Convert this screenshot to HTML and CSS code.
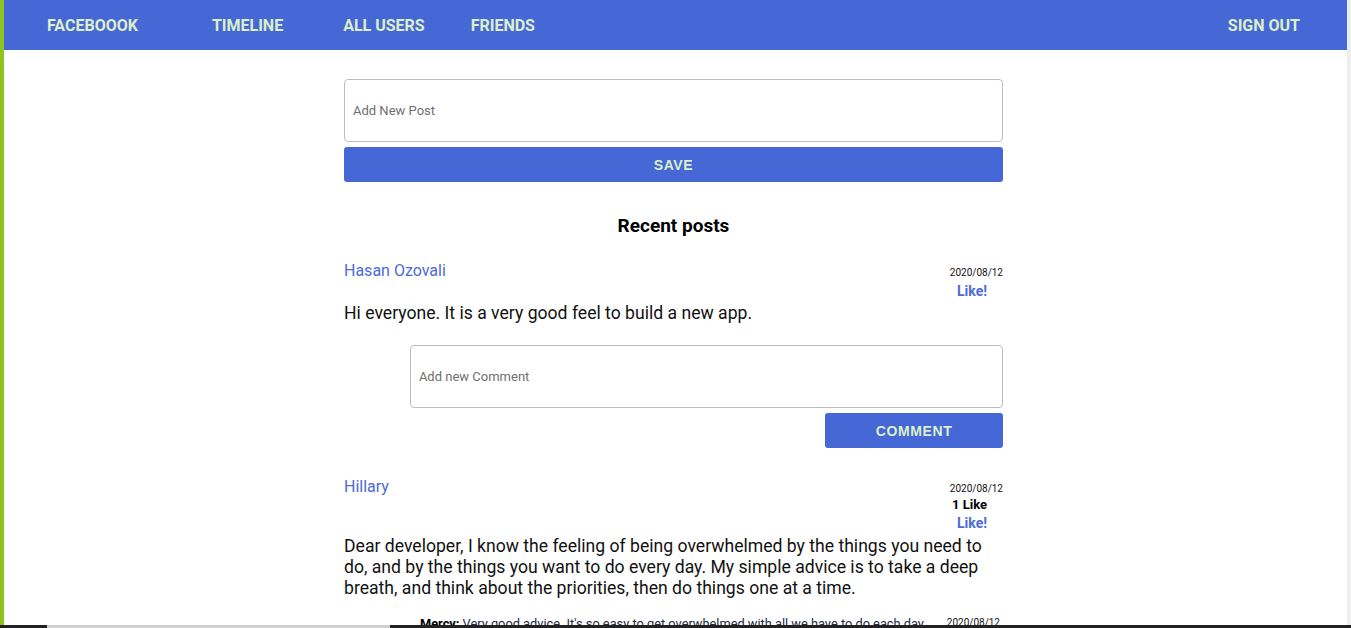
FILE: index.html
```html
<!DOCTYPE html>
<html lang="en">
<head>
<meta charset="utf-8">
<title>Facebooook</title>
<link rel="stylesheet" href="styles.css">
</head>
<body>
<header class="navbar">
  <nav class="nav-left">
    <a class="nav-link brand" href="#">Faceboook</a>
    <a class="nav-link timeline" href="#">Timeline</a>
    <a class="nav-link users" href="#">All users</a>
    <a class="nav-link friends" href="#">Friends</a>
  </nav>
  <a class="nav-link signout" href="#">Sign out</a>
</header>

<div class="page">
<main class="container">
  <form class="post-form">
    <input class="text-input" type="text" placeholder="Add New Post">
    <button class="btn btn-full" type="button">Save</button>
  </form>

  <h2 class="section-title">Recent posts</h2>

  <article class="post">
    <div class="post-head">
      <a class="author" href="#">Hasan Ozovali</a>
      <div class="meta">
        <span class="date">2020/08/12</span>
        <a class="like" href="#">Like!</a>
      </div>
    </div>
    <p class="post-body">Hi everyone. It is a very good feel to build a new app.</p>
    <form class="comment-form">
      <input class="text-input" type="text" placeholder="Add new Comment">
      <div class="comment-actions">
        <button class="btn btn-comment" type="button">Comment</button>
      </div>
    </form>
  </article>

  <article class="post">
    <div class="post-head">
      <a class="author" href="#">Hillary</a>
      <div class="meta">
        <span class="date">2020/08/12</span>
        <span class="like-count">1 Like</span>
        <a class="like" href="#">Like!</a>
      </div>
    </div>
    <p class="post-body">Dear developer, I know the feeling of being overwhelmed by the things you need to do, and by the things you want to do every day. My simple advice is to take a deep breath, and think about the priorities, then do things one at a time.</p>
    <ul class="comments">
      <li class="comment">
        <p class="comment-text"><strong>Mercy:</strong> Very good advice. It's so easy to get overwhelmed with all we have to do each day.</p>
        <span class="date">2020/08/12</span>
      </li>
    </ul>
  </article>
</main>
</div>

<div class="bottom-bar"><span class="bottom-thumb"></span></div>
</body>
</html>
```

FILE: styles.css
```css
html {
  overflow: hidden;
  background: #ffffff;
}

body {
  margin: 0;
  min-height: 628px;
  border-left: 4px solid #8fc31f;
  border-right: 4px solid #eeeeee;
  font-family: Roboto, "Liberation Sans", Arial, sans-serif;
  color: #111111;
  background: #ffffff;
}

.navbar {
  height: 50px;
  background: #4568d6;
  display: flex;
  align-items: center;
  justify-content: space-between;
  padding: 0 47px 0 43px;
}

.nav-left {
  display: flex;
  align-items: center;
}

.nav-link {
  color: #dcefc8;
  text-decoration: none;
  text-transform: uppercase;
  font-weight: 700;
  font-size: 16px;
}

.timeline { margin-left: 74px; }
.users { margin-left: 60px; }
.friends { margin-left: 46px; }

.page {
  padding-right: 4px;
}

.container {
  width: 659px;
  margin: 0 auto;
  padding-top: 29px;
}

.text-input {
  display: block;
  box-sizing: border-box;
  width: 100%;
  height: 63px;
  border: 1px solid #bdbdbd;
  border-radius: 4px;
  padding: 0 8px;
  font-family: Roboto, "Liberation Sans", Arial, sans-serif;
  font-size: 13px;
  color: #333;
  outline: none;
}

.text-input::placeholder {
  color: #6f6f6f;
}

.btn {
  display: block;
  height: 35px;
  border: none;
  border-radius: 3px;
  background: #4568d6;
  color: #dcefc8;
  font-family: "Liberation Sans", Arial, sans-serif;
  font-weight: 700;
  font-size: 14px;
  letter-spacing: 0.6px;
  text-transform: uppercase;
  cursor: pointer;
}

.btn-full {
  width: 100%;
  margin-top: 5px;
}

.section-title {
  margin: 32px 0 0;
  text-align: center;
  font-size: 19px;
  font-weight: 700;
  color: #000;
  line-height: 24px;
}

.post {
  margin-top: 22px;
}

.post + .post {
  margin-top: 28px;
}

.post-head {
  display: flex;
  justify-content: space-between;
  align-items: flex-start;
}

.author {
  color: #4c6ad8;
  text-decoration: none;
  font-size: 16px;
  line-height: 18px;
  padding-top: 2px;
}

.meta {
  display: flex;
  flex-direction: column;
  align-items: flex-end;
  padding-top: 7px;
}

.date {
  font-size: 10px;
  line-height: 12px;
  color: #111;
}

.like-count {
  font-size: 13px;
  font-weight: 700;
  line-height: 16px;
  color: #000;
  margin-top: 2px;
  margin-right: 16px;
}

.like {
  font-size: 14px;
  font-weight: 700;
  line-height: 14px;
  color: #4c6ad8;
  text-decoration: none;
  margin-top: 5px;
  margin-right: 16px;
}

.like-count + .like {
  margin-top: 3px;
  margin-bottom: 1px;
}

.post-body {
  margin: 5px 0 0;
  font-size: 17.6px;
  line-height: 21px;
  color: #111;
}

.comment-form {
  margin: 21px 0 0 10%;
}

.comment-actions {
  display: flex;
  justify-content: flex-end;
  margin-top: 5px;
}

.btn-comment {
  width: 30%;
}

.comments {
  list-style: none;
  margin: 18px 0 0 76px;
  padding: 0;
}

.comment {
  display: flex;
  justify-content: space-between;
  align-items: flex-start;
  padding-right: 3px;
}

.comment-text {
  margin: 0;
  font-size: 12.8px;
  line-height: 14px;
  color: #1f2a44;
}

.comment-text strong {
  color: #000;
}

.bottom-bar {
  position: fixed;
  left: 0;
  right: 0;
  bottom: 0;
  height: 3px;
  background: #222222;
}

.bottom-thumb {
  position: absolute;
  left: 47px;
  width: 343px;
  top: 0;
  bottom: 0;
  background: #cfcfcf;
}
```
